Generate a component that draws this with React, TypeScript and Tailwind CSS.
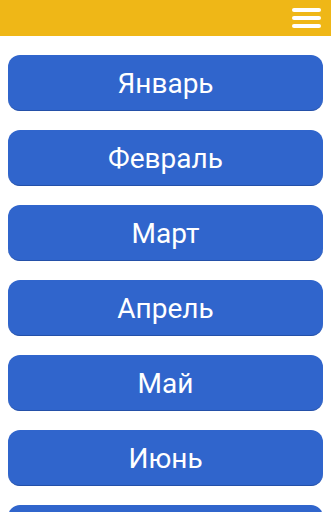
const months = ["Январь", "Февраль", "Март", "Апрель", "Май", "Июнь", "Июль"];

export default function App() {
  return (
    <div className="min-h-screen bg-white font-['Roboto',sans-serif]">
      <header className="flex h-9 items-center justify-end bg-[#efb717] pr-[10px]">
        <div className="flex w-[29px] flex-col gap-[4px]">
          <span className="h-[4px] rounded-full bg-white" />
          <span className="h-[4px] rounded-full bg-white" />
          <span className="h-[4px] rounded-full bg-white" />
        </div>
      </header>
      <main className="flex flex-col gap-[19px] px-[8px] pt-[19px]">
        {months.map((m) => (
          <button
            key={m}
            className="flex h-[56px] w-full items-center justify-center rounded-[12px] border-b border-[#2450a8] bg-[#3065cc] pt-[2px] text-[28px] leading-none text-white"
          >
            {m}
          </button>
        ))}
      </main>
    </div>
  );
}
